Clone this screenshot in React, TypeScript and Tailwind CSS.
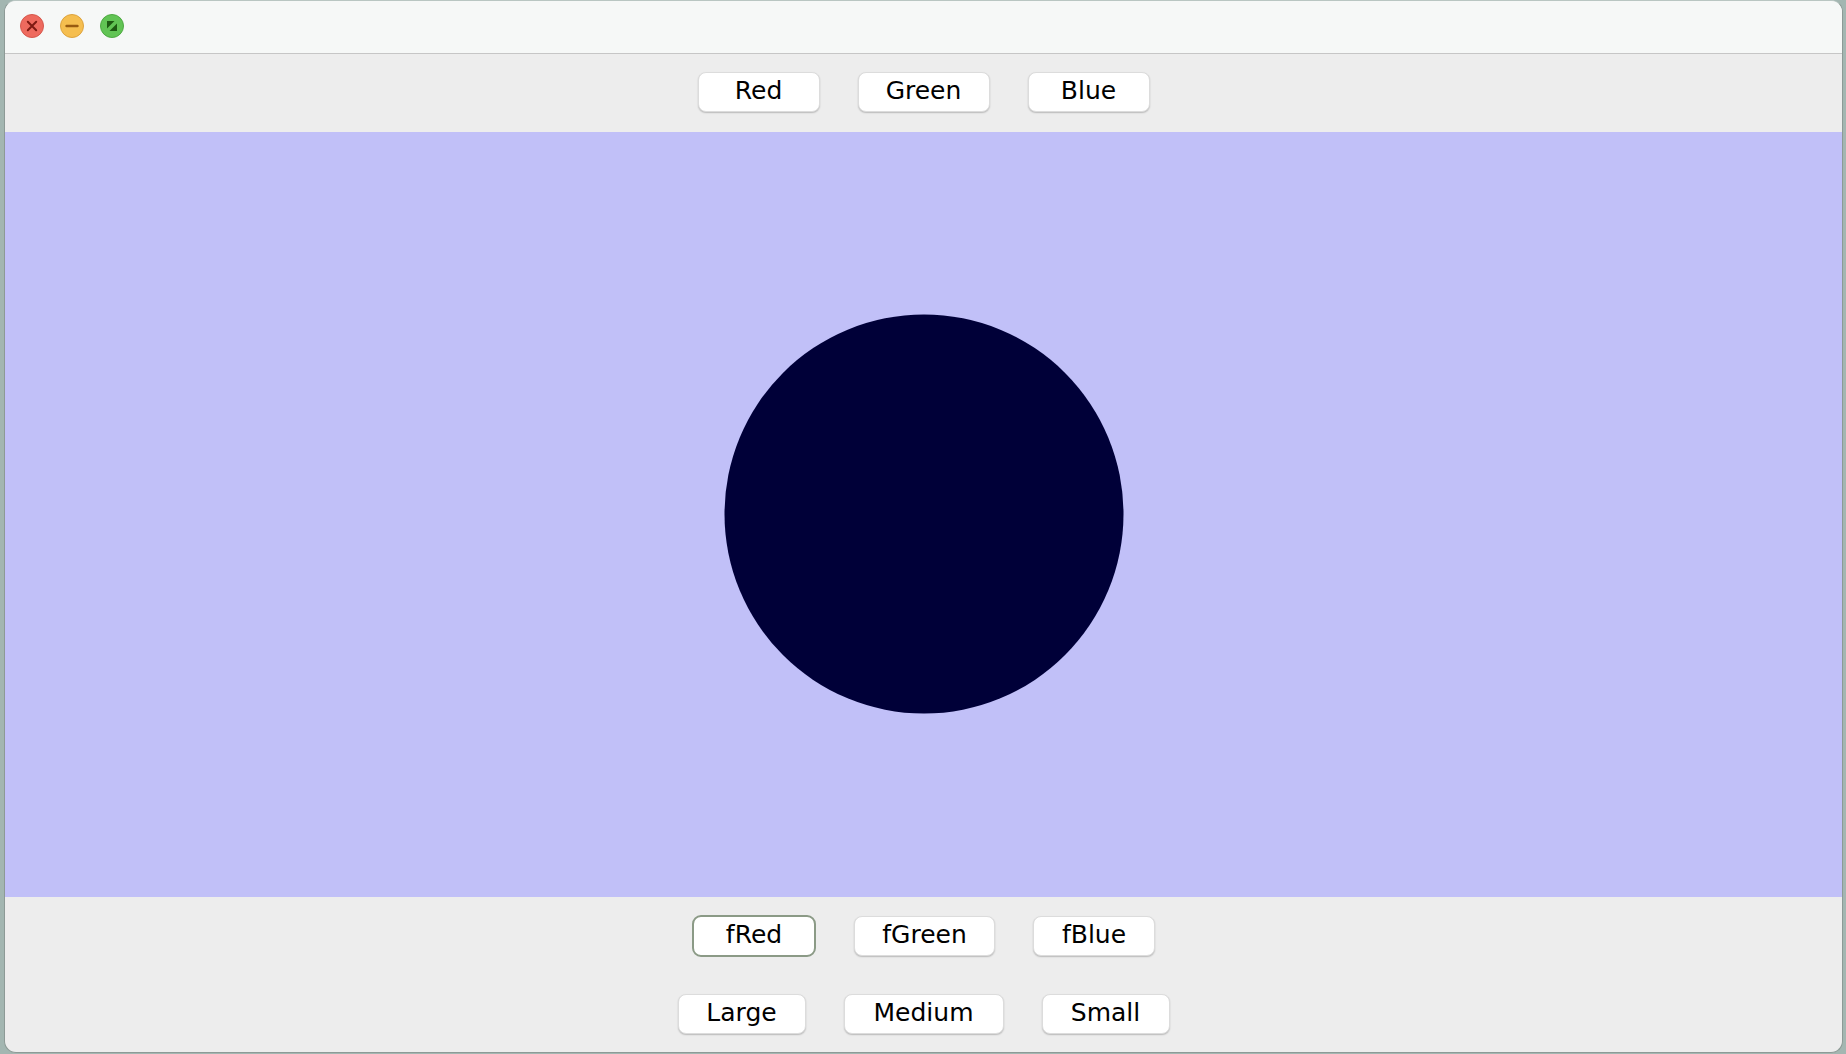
import React from "react";

const font = { fontFamily: '"Lucida Grande", "DejaVu Sans", "Open Sans", sans-serif' };

function Btn({ label, w, focused }: { label: string; w: string; focused?: boolean }) {
  return (
    <button
      className={
        focused
          ? `${w} flex h-[42px] items-center justify-center rounded-[9px] border-2 border-[#8b9a86] bg-white text-[25px] leading-none text-black`
          : `${w} flex h-[40px] items-center justify-center rounded-[8px] border border-[#dcdcdc] bg-white text-[25px] leading-none text-black shadow-[0_1px_1.5px_rgba(0,0,0,0.22)]`
      }
      style={font}
    >
      <span className="-mt-[3px]">{label}</span>
    </button>
  );
}

function TrafficLights() {
  return (
    <div className="flex items-center gap-4 pl-[15px] pb-[2px]">
      <svg width="24" height="24" viewBox="0 0 24 24">
        <circle cx="12" cy="12" r="11.5" fill="#ee6a5e" stroke="#d5584d" strokeWidth="1" />
        <path d="M7.8 7.8 L16.2 16.2 M16.2 7.8 L7.8 16.2" stroke="#7e1a12" strokeWidth="2" strokeLinecap="round" />
      </svg>
      <svg width="24" height="24" viewBox="0 0 24 24">
        <circle cx="12" cy="12" r="11.5" fill="#f5be4f" stroke="#dca33e" strokeWidth="1" />
        <path d="M6.5 12 H17.5" stroke="#985a10" strokeWidth="2.4" strokeLinecap="round" />
      </svg>
      <svg width="24" height="24" viewBox="0 0 24 24">
        <circle cx="12" cy="12" r="11.5" fill="#61c454" stroke="#4ea942" strokeWidth="1" />
        <path d="M7 7 H14.5 L7 14.5 Z" fill="#1d5a12" />
        <path d="M17 17 H9.5 L17 9.5 Z" fill="#1d5a12" />
      </svg>
    </div>
  );
}

export default function App() {
  return (
    <div className="h-[1054px] w-[1846px] bg-[#a3b6b1] pl-[4px]">
      <div className="flex h-[1053px] w-[1839px] flex-col overflow-hidden rounded-[12px] border border-[#8d9a96] border-t-[#b9c6c2] bg-[#ededed]">
        <div className="flex h-[53px] shrink-0 items-center border-b border-[#c6c6c6] bg-[#f6f8f7]">
          <TrafficLights />
        </div>

        <div className="flex h-[78px] shrink-0 items-center justify-center gap-[38px] pb-[3px]">
          <Btn label="Red" w="w-[122px]" />
          <Btn label="Green" w="w-[132px]" />
          <Btn label="Blue" w="w-[122px]" />
        </div>

        <div className="flex h-[765px] shrink-0 items-center justify-center bg-[#c1c0f8]">
          <svg width="400" height="400" viewBox="0 0 400 400" className="-mt-[2px]">
            <circle cx="200" cy="200" r="199.5" fill="#000038" />
          </svg>
        </div>

        <div className="flex flex-1 flex-col items-center justify-center gap-[37px]">
          <div className="flex h-[42px] items-center gap-[38px]">
            <Btn label="fRed" w="w-[124px]" focused />
            <Btn label="fGreen" w="w-[141px]" />
            <Btn label="fBlue" w="w-[122px]" />
          </div>
          <div className="flex items-center gap-[38px]">
            <Btn label="Large" w="w-[128px]" />
            <Btn label="Medium" w="w-[160px]" />
            <Btn label="Small" w="w-[128px]" />
          </div>
        </div>
      </div>
    </div>
  );
}
